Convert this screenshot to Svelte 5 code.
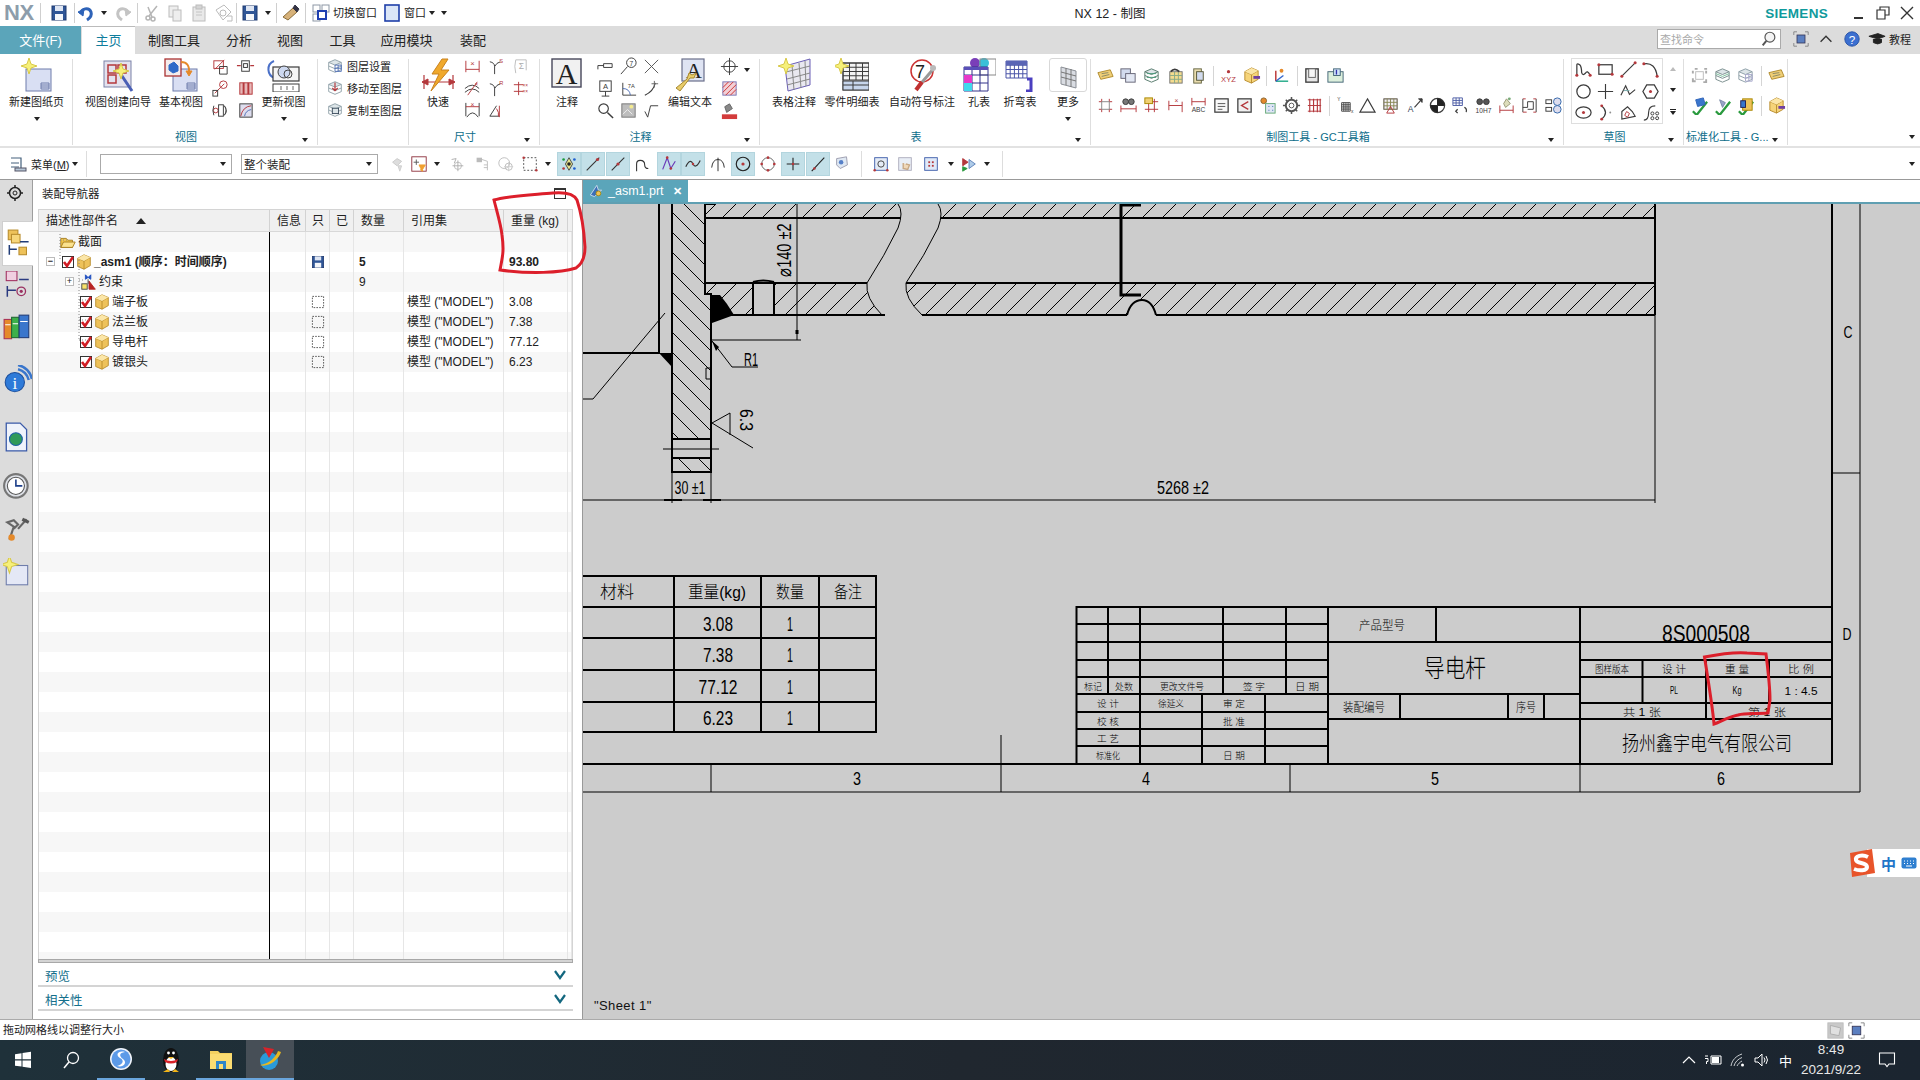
<script>
  const RED = "#b4383c", DK = "#3b3b3b", BL = "#4f6fb5", PALE = "#cdd8ef", YL = "#eec25a", GR = "#8f8f8f", OR = "#e58a2b";
  const p = (d, s = DK, w = 1, f = "none") => `<path d="${d}" fill="${f}" stroke="${s}" stroke-width="${w}"/>`;
  const r = (x, y, w, h, f = "none", s = "none", sw = 1) => `<rect x="${x}" y="${y}" width="${w}" height="${h}" fill="${f}" stroke="${s}" stroke-width="${sw}"/>`;
  const c = (x, y, rad, f = "none", s = DK, sw = 1) => `<circle cx="${x}" cy="${y}" r="${rad}" fill="${f}" stroke="${s}" stroke-width="${sw}"/>`;
  const t = (x, y, txt, size = 7, f = DK, fam = "Liberation Sans") => `<text x="${x}" y="${y}" font-size="${size}" fill="${f}" font-family="${fam}" text-anchor="middle">${txt}</text>`;
  const star = (x, y) => `<path d="M${x} ${y - 8}L${x + 2} ${y - 2}L${x + 8} ${y}L${x + 2} ${y + 2}L${x} ${y + 8}L${x - 2} ${y + 2}L${x - 8} ${y}L${x - 2} ${y - 2}Z" fill="#f6f07a" stroke="#d8c94a"/>`;
  const grid = (x, y, w, h, nx, ny, s = DK) => {
    let d = `M${x} ${y}h${w}v${h}h${-w}Z`;
    for (let i = 1; i < nx; i++) d += `M${x + (i * w) / nx} ${y}v${h}`;
    for (let i = 1; i < ny; i++) d += `M${x} ${y + (i * h) / ny}h${w}`;
    return p(d, s);
  };
  const cube = (f = YL) => p("M3 6L10 2L17 5V14L10 18L3 15Z", "#b98d2e", 1, f) + p("M3 6L10 9L17 5M10 9V18", "#b98d2e", 1, "none") + p("M3 6L10 2L17 5L10 9Z", "none", 1, "#fbe6a8");
  const floppy = (f = "#2f5596") => r(3, 3, 14, 14, f, "#1f3a70") + r(6, 3, 8, 5, "#dfe6f3") + r(6, 11, 8, 6, "#f4f6fa");
  const sheet = (x, y, w, h) => r(x, y, w, h, "#d9dff3", "#6f7dab") + grid(x + w - 10, y + h - 8, 8, 6, 1, 3, "#6f7dab");
  const stack = (s) => p("M3 6L10 3L17 6L10 9Z", s, 1, "#dde5e8") + p("M3 10L10 13L17 10M3 14L10 17L17 14", s) + p("M3 6V14M17 6V14", s);

  const I = {
    save: floppy(),
    undo: p("M5 11C5 5 13 4 15 9C16 12 14 15 11 17", "#2e63b8", 3) + p("M2 9L8 6L7 13Z", "#2e63b8", 1, "#2e63b8"),
    redo: p("M15 11C15 5 7 4 5 9C4 12 6 15 9 17", "#c4c4c4", 3) + p("M18 9L12 6L13 13Z", "#c4c4c4", 1, "#c4c4c4"),
    cut: c(6, 15, 2, "none", "#b5b5b5", 1.5) + c(11, 16, 2, "none", "#b5b5b5", 1.5) + p("M7 13L15 3M10 14L6 4", "#b5b5b5", 1.5),
    copy: r(4, 3, 9, 11, "#eee", "#bcbcbc") + r(8, 7, 8, 11, "#eee", "#bcbcbc"),
    paste: r(4, 4, 12, 14, "#e9e9e9", "#bcbcbc") + r(7, 2, 6, 4, "#d4d4d4", "#bcbcbc") + p("M7 9h6M7 12h6", "#c4c4c4"),
    dup: p("M3 7L11 2L18 9L10 17Z", "#bcbcbc") + c(10, 10, 3, "none", "#bcbcbc") + p("M14 13h5v5h-5", "#bcbcbc"),
    brush: p("M3 14L13 5L17 9L8 17Z", "#8a6d3b", 1, "#d7b27a") + p("M13 5L15 2L19 6L17 9Z", "#334", 1, "#334"),
    swin: r(2, 2, 7, 7, "#fff", "#8d97a5") + r(11, 2, 7, 7, "#fff", "#8d97a5") + r(2, 11, 7, 7, "#fff", "#8d97a5") + r(7, 8, 8, 8, "#fff", "#1f3fb0", 2),
    win: r(3, 2, 14, 16, "#dbe6f7", "#1f3fa8", 1.6),
    // view group
    vA: r(3, 4, 10, 8, "none", RED) + p("M4 13L14 3", RED, 1) + p("M9 18V10L17 10V18Z", DK),
    vB: r(6, 4, 8, 11, "none", DK) + r(8, 7, 4, 4, "none", DK) + p("M1 9h4M15 9h4", RED, 1.4),
    vC: p("M4 15L14 5", RED) + r(2, 12, 5, 6, "none", DK) + c(13, 6, 4, "none", RED),
    vD: r(4, 4, 13, 12, "#e7b8b8", RED) + p("M8 4v12M13 4v12", RED, 2),
    vE: c(5, 10, 2.5, "none", RED) + r(8, 4, 5, 12, "none", DK) + p("M14 5q4 5 0 10", DK, 1.2) + p("M3 5q-2 5 0 10", DK),
    vF: r(4, 3, 13, 14, "#dde", DK) + p("M5 16Q7 6 16 5", RED) + p("M9 16Q10 10 16 9", BL),
    layerSet: stack("#8c9ea6") + grid(10, 9, 7, 7, 2, 2, BL),
    layerMove: stack("#8c9ea6") + p("M10 4V13M7 10L10 13L13 10", RED, 1.3),
    layerCopy: stack("#8c9ea6") + r(7, 8, 7, 6, "#dde5e8", "#345"),
    // dims
    dA: p("M3 4V16M17 4V16M3 13H17", RED) + t(10, 9, "×", 8, RED),
    dB: p("M8 18V10Q8 6 3 5M8 10Q10 6 14 5", DK) + t(15, 6, "S", 6, RED),
    dC: p("M5 3L16 3M5 3Q3 10 5 17M16 3V14", "#bdbdbd") + t(11, 13, "Σ", 9, "#aaa"),
    dD: p("M2 10Q10 3 17 10M2 14Q10 7 17 14", DK) + p("M5 17L15 3", RED) + t(14, 7, "×", 6, RED),
    dE: p("M8 18V10Q8 6 3 5M8 10Q10 6 14 5", DK) + t(15, 6, "R", 6, RED),
    dF: p("M3 6H13M3 13H13M8 3V17", RED) + t(15, 8, "××", 5, RED) + t(15, 15, "××", 5, RED),
    dG: p("M3 2V16M17 2V16M4 17Q10 8 16 17", DK) + p("M3 6H17", RED) + t(10, 6, "×", 7, RED),
    dH: p("M3 16L10 5M3 16H13", DK) + p("M13 5V17", RED) + p("M10 8q3 4 2 8", RED),
    nA: p("M2 9H8M8 7H17V11H8Z", DK) + p("M2 9V13", DK),
    nB: p("M2 18L9 10", DK) + c(13, 6, 5, "none", DK) + t(13, 9, "7", 7, DK),
    nC: p("M3 3L17 17M17 3L3 17", "#555"),
    nD: r(4, 2, 12, 11, "none", DK) + t(10, 11, "A", 8) + p("M10 13V18M6 18H14", DK),
    nE: p("M4 17V4M4 17H18", DK) + p("M4 10Q11 10 12 17", BL) + t(13, 9, "7A", 6),
    nF: p("M3 17Q12 13 14 4", DK, 1.2) + p("M13 2V9M10 5H17", "#666", 1, "none"),
    nG: c(8, 8, 5, "none", DK, 1.2) + p("M12 12L18 18", DK, 1.5),
    nH: r(3, 3, 14, 14, "#bdbdbd", "#777") + p("M4 14L9 9L14 14", "#eee") + c(13, 6, 2, "#f3ea8f", "none"),
    nI: p("M3 11L6 17L9 5H17", DK),
    target: c(10, 10, 6, "none", DK) + p("M10 1V19M1 10H19", DK),
    hatch: r(3, 3, 14, 14, "#f2d0d6", "#7a78b8") + p("M3 9L9 3M3 14L14 3M6 17L17 6M11 17L17 11", "#c33"),
    paint: r(2, 14, 16, 5, "#d33c3c") + p("M7 12L13 8L10 3L5 6Z", "#666", 1, "#888"),
    // GC
    tag: p("M2 7L15 4L18 11L5 14Z", "#b08b2e", 1, "#f0cf76") + p("M6 8L13 7M6 11L14 9", "#886"),
    sheets: r(2, 3, 10, 10, "#d2dbee", "#667") + r(7, 8, 10, 9, "#e2e7f3", "#667"),
    gstack: stack("#55796c") + p("M5 8H15M5 12H15", "#4a9a7a"),
    tbook: r(4, 6, 13, 12, "#f4dc8e", "#777") + p("M4 10H17M4 14H17M9 6V18M13 6V18", "#8a8") + p("M5 6Q9 1 14 6", DK, 2),
    bookm: r(5, 3, 8, 15, "#e9dcae", "#664") + r(8, 6, 7, 9, "#d2dbee", "#553"),
    xyz: t(10, 17, "XYZ", 8, RED) + c(10, 6, 1.7, RED, "none"),
    boxar: cube("#f6d479") + p("M12 12H19", "#7040a0", 3),
    axis: p("M4 16V5", "#b33", 1.5) + p("M4 16H17", "#2a8", 1.5) + p("M4 16L12 10", "#36c", 1.5) + c(10, 5, 2, OR, "none"),
    gframe: r(3, 3, 13, 14, "#e7e7e7", DK, 1.4) + r(6, 3, 7, 9, "#f6f6f6", "#666"),
    gflag: r(2, 6, 16, 11, "#dcefdc", "#467") + r(8, 3, 7, 7, "#cfe2fa", "#467") + p("M11 4V9", "#33a", 1.4),
    g1: p("M3 6h3M14 6h3M3 14h3M14 14h3M6 3v3M14 3v3M6 14v3M14 14v3", RED) + p("M6 6h8v8h-8z", "#888", 1),
    g2: r(2, 13, 16, 1, RED) + p("M2 10V17M18 10V17", RED) + c(7, 6, 3, "#777", DK) + c(13, 6, 3, "#777", DK),
    g3: p("M3 6H17M3 14H17M7 3V17M13 3V17", RED) + r(3, 2, 8, 6, "#f1d074", "#a80"),
    g4: p("M3 5V15M3 10H17M17 6V17", RED) + t(11, 7, "×", 7, RED),
    g5: p("M3 2V10M17 2V10M3 6H17", RED) + t(10, 17, "ABC", 7, DK),
    g6: r(3, 3, 14, 14, "#f8f8f8", DK, 1.3) + p("M6 8H14M6 11H14M6 14H11", "#555"),
    g7: r(3, 3, 14, 14, "#f0f0f0", DK, 1.3) + p("M14 6L7 10L14 14", RED, 1.5),
    g8: c(6, 5, 3, OR, "#863") + r(8, 8, 10, 10, "#dfe6f5", "#6a7") + p("M11 11h1M15 11h1M11 15h1M15 15h1", "#36a"),
    gear: c(10, 10, 6, "none", "#555", 2) + c(10, 10, 2.5, "none", "#555") + p("M10 1v3M10 16v3M1 10h3M16 10h3M4 4l2 2M14 14l2 2M16 4l-2 2M6 14l-2 2", "#555", 1.6),
    g9: p("M3 4H17M3 10H17M3 16H17", RED) + p("M5 3V17M9 3V17M13 3V17M16 3V17", RED, 1.2),
    g10: grid(7, 7, 9, 9, 4, 4, "#444") + t(4, 5, "Y", 5) + t(18, 18, "x", 5),
    tri: p("M10 3L18 17H2Z", DK, 1.2),
    g11: r(3, 3, 14, 11, "#f3f0f5", "#7060a0") + grid(3, 3, 14, 11, 4, 3, "#885") + p("M10 11L14 18H6Z", RED),
    g12: t(6, 17, "A", 9, "#345") + p("M10 12L18 3", DK, 1.2) + p("M14 3H18V7", DK, 1, DK),
    ball: c(10, 10, 7.5, "#fff", DK, 1.3) + p("M10 3A7 7 0 0 1 17 10H10Z", "#222", 1, "#222") + p("M10 17A7 7 0 0 1 3 10H10Z", "#222", 1, "#222"),
    g13: grid(2, 2, 10, 8, 3, 3, "#5060a8") + p("M14 12q3 1 2 5M7 14l-2 2 2 2", DK, 1.3),
    g14: c(6, 6, 3, "#555", DK) + c(13, 6, 3, "#555", DK) + t(10, 18, "10H7", 7, DK),
    g15: p("M3 10V18M17 10V18M3 15H17", RED) + p("M10 3L14 8L9 12L7 8Z", "#997", 1, "#ddb") + c(13, 3, 1.5, "#7a7", "none"),
    g16: p("M3 12H8V6H14V14H8M3 3V17M17 3V17", DK) + p("M3 3H6M3 17H7M14 3H17M14 17H17", RED),
    g17: r(2, 4, 6, 4, "none", DK) + r(2, 12, 6, 4, "none", DK) + c(14, 6, 4, "#dde", "#36a") + c(14, 14, 4, "#dde", "#36a"),
    // sketch
    sk1: p("M3 16V5Q3 3 6 5Q8 7 8 13Q9 17 12 14Q14 10 17 16", DK, 1.3) + c(3, 16, 1.6, RED, "none") + c(17, 16, 1.6, RED, "none"),
    sk2: r(3, 5, 14, 10, "none", DK, 1.3) + c(3, 5, 1.6, RED, "none") + c(17, 15, 1.6, RED, "none"),
    sk3: p("M3 17L17 3", DK, 1.2) + c(3, 17, 1.6, RED, "none") + c(17, 3, 1.6, RED, "none"),
    sk4: p("M3 4Q15 2 17 17", DK, 1.3) + c(3, 4, 1.6, RED, "none") + c(17, 17, 1.6, RED, "none"),
    sk5: c(10, 10, 7, "none", DK, 1.3),
    sk6: p("M10 2V18M2 10H18", DK, 1.2),
    sk7: p("M2 14L7 4L11 13L17 8", DK, 1.2) + p("M5 9h6", "#7aa"),
    sk8: p("M2 10L6 3H14L18 10L14 17H6Z", DK, 1.3) + c(10, 10, 1.6, RED, "none"),
    sk9: `<ellipse cx="10" cy="10" rx="8" ry="6" fill="none" stroke="${DK}" stroke-width="1.3"/>` + c(10, 10, 1.6, RED, "none"),
    sk10: p("M6 3Q14 10 6 17", DK, 1.3) + c(15, 10, 1, GR, "none") + c(6, 3, 1.5, RED, "none") + c(6, 17, 1.5, RED, "none"),
    sk11: p("M3 9L9 4L14 9L17 14L3 17Z", DK, 1.2) + p("M8 9L11 11L9 15L6 13Z", RED),
    sk12: p("M3 18Q8 18 8 10Q8 3 15 3", DK, 1.2) + c(12, 11, 1.6, "none", DK) + c(17, 11, 1.6, "none", DK) + c(12, 16, 1.6, "none", DK) + c(17, 16, 1.6, "none", DK),
    // std
    st1: p("M5 3H8M3 5V8M15 3H18M17 5V8M3 13V16H6M14 17H17V14", "#aaa", 2) + r(6, 6, 8, 8, "none", "#bbb"),
    st2: stack("#7a8e8e") + p("M3 8L10 11L17 8", "#7b9"),
    st3: stack("#8c9ea6") + grid(10, 9, 7, 7, 2, 2, "#aac"),
    st4: p("M3 16L7 20L18 6", "#2a9a3e", 2.4) + p("M6 4L14 2L16 9L8 11Z", "#2e63b8", 1, "#3a76cc"),
    st5: p("M3 16L7 20L18 6", "#2a9a3e", 2.4) + p("M7 4L13 7L10 12Z", "#7a88a8", 1, "#98a6c8"),
    st6: p("M3 16L7 20L18 6", "#2a9a3e", 2.4) + r(7, 3, 10, 12, YL, "#a80") + r(5, 5, 5, 7, "#3a76cc", "#225"),
    // toolbar
    menu: p("M2 4H12V17M2 9H10M2 13H10", "#44607c", 1.2) + r(6, 14, 11, 3, "#b8c8d8", "#556"),
    f1: p("M4 8L9 4L14 7L9 12Z", "#c8c8c8", 1, "#ddd") + p("M10 12L14 12L12 18Z", "#ccc", 1, "#ddd"),
    f2: r(2, 2, 16, 16, "#fff", "#8c2f3a") + p("M7 5V11M4 8H10", "#555") + p("M10 11H17L14 16V18L12 17V15Z", "#f0a030", 1, "#f0a030"),
    f3: c(11, 12, 4, "none", "#bbb") + p("M11 6V18M5 12H17M4 5L9 4L7 9", "#aaa"),
    f4: r(4, 3, 6, 5, "#bbb") + p("M10 5L16 7V17M12 11h4M12 14h4", "#bbb"),
    f5: c(8, 9, 6, "none", "#bbb") + c(13, 13, 4, "none", "#bbb") + p("M13 8V18M8 13H18", "#ccc"),
    f6: `<path d="M3 3h14v14H3z" fill="none" stroke="#444" stroke-dasharray="2 2"/>` + c(3, 3, 1.4, RED, "none") + c(17, 17, 1.4, RED, "none"),
    s1: p("M10 3L14 10L10 17L6 10Z", "#444", 1, "#e5e28c") + c(4, 5, 1.5, "#1c9a3c", "none") + c(4, 15, 1.5, RED, "none") + c(16, 5, 1.5, "#1f5fd0", "none") + c(16, 15, 1.5, "#1f5fd0", "none") + c(10, 10, 2, "#222", "none"),
    s2: p("M3 17L17 3", "#333", 1.2) + c(15, 5, 1.8, RED, "none"),
    s3: p("M3 17L17 3", "#333", 1.2) + c(10, 10, 1.8, RED, "none"),
    s4: p("M4 18V10Q4 6 8 6Q13 6 13 11Q13 15 17 15", "#333", 1.2),
    s5: p("M3 16L8 3L12 15L17 7", "#6a3ab8", 1.3) + c(8, 3, 1.5, RED, "none") + c(12, 15, 1.5, RED, "none"),
    s6: p("M2 13Q7 3 10 10Q13 16 18 6", "#333", 1.3) + c(10, 10, 1.4, RED, "none"),
    s7: p("M10 3V18M3 14Q4 5 10 5Q16 5 17 14", "#333", 1.1),
    s8: c(10, 10, 7.5, "none", "#222", 1.3) + c(10, 10, 1.8, RED, "none"),
    s9: c(10, 10, 7, "none", "#666", 1.1) + c(10, 3, 1.5, RED, "none") + c(3, 10, 1.5, RED, "none") + c(17, 10, 1.5, RED, "none") + c(10, 17, 1.5, RED, "none"),
    s10: p("M10 3V17M3 10H17", "#222", 1.2) + c(10, 10, 1.4, RED, "none"),
    s11: p("M3 18L17 3", "#222", 1.2) + c(6, 15, 1.5, RED, "none"),
    s12: p("M4 4L15 2L16 11L8 15L4 11Z", "#99a", 1, "#dfe8f3") + c(9, 8, 2.5, "#5680c8", "none"),
    v1: r(3, 3, 14, 14, "#e4ebf6", "#3a5aa8") + c(10, 10, 3.5, "none", DK) + c(3, 17, 1.4, RED, "none") + c(17, 17, 1.4, RED, "none"),
    v2: r(3, 3, 14, 14, "#e9eef6", "#aab") + p("M8 9V15L13 16L15 11L11 10", "#c8a884", 1.5, "#f0d8b8"),
    v3: r(3, 3, 14, 14, "#dfe9f8", "#3a5aa8") + r(7, 7, 2, 2, RED) + r(11, 7, 2, 2, RED) + r(7, 11, 2, 2, RED) + r(11, 11, 2, 2, RED),
    v4: p("M10 5L17 10L10 15Z", "#5a7fb8", 1, "#aecbe8") + p("M3 4L9 8L3 12Z", RED, 1, RED) + p("M3 13L8 15L3 18Z", "#2a9a3e", 1, "#2a9a3e"),
    tGear: c(10, 10, 5.5, "none", "#222", 1.5) + c(10, 10, 2, "none", "#222") + p("M10 2v3M10 15v3M2 10h3M15 10h3", "#222", 1.5),
    // status
    flagsq: r(1, 1, 18, 18, "#c9c9c9", "#bbb") + p("M4 4L16 7L14 16L4 14Z", "#aaa", 1, "#e0e0e0"),
    fitwin: p("M1 5V1H5M15 1H19V5M1 15V19H5M15 19H19V15", "#777") + r(5, 5, 10, 10, "#5b7fc0", "#335"),
    // tree
    folder: p("M2 6H8L10 8H15V16H2Z", "#a57a1c", 1, "#f2c74e") + p("M2 16L5 10H18L15 16Z", "#a57a1c", 1, "#fbe28e"),
    asm: cube(),
    cube: cube(),
    constraint: p("M6 2L9 5L12 2V7L9 5L6 7Z", "#1f4fc0", 1, "#1f4fc0") + r(2, 12, 6, 6, "#f7e26a", "#444") + p("M10 18L10 9L17 18Z", "#b72222", 1, "#b72222") + p("M9 7V12", DK, 1, "none"),
    dash: `<rect x="3" y="3" width="14" height="14" fill="none" stroke="#333" stroke-dasharray="2 1.5"/>`,
    // tab bar right
    search: c(11, 8, 5.5, "#f4f4f4", "#555", 1.3) + p("M7 12L3 17", "#555", 2.2),
    tChev: p("M4 13L10 7L16 13", "#333", 1.5),
    help: c(10, 10, 8, "#3b6fd0", "#244fa4") + t(10, 15, "?", 13, "#fff"),
    edu: p("M1 7L11 4L19 7L11 10Z", "#222", 1, "#222") + p("M6 10V14Q11 17 15 14V10", "#222", 1, "#222"),
    tabIco: p("M3 15L11 3L13 9L17 9L8 17Z", "#e0e6f2", 1, "#3b6fb8") + c(13, 13, 3, YL, "#a80"),
  };

  const B = {
    newSheet: sheet(6, 11, 25, 22) + star(9, 8),
    wizard: r(3, 3, 27, 26, "#e4e2ee", "#7b82a8") + r(7, 7, 8, 8, "none", RED, 1.5) + r(17, 7, 8, 8, "none", RED, 1.5) + r(7, 17, 8, 8, "none", RED, 1.5) + p("M19 15L31 33", "#4a5fb5", 3) + star(20, 13),
    baseView: sheet(9, 11, 24, 22) + r(1, 1, 16, 17, "#f4ecec", "#a33", 1.3) + p("M5 7L10 4L14 8V13L9 15L5 12Z", "#2f6ac8", 1, "#2f6ac8") + p("M17 4Q26 4 25 15", OR, 2) + p("M22 13L28 13L25 18Z", OR, 1, OR),
    updView: p("M7 3A9 9 0 0 0 8 20", "#4a70c8", 2) + r(6, 9, 26, 14, "#f5f5f5", DK, 1.2) + c(17, 14, 6, PALE, "#444") + c(21, 16, 4, "none", "#444") + r(6, 26, 26, 8, "none", DK) + p("M14 28v4M20 28v4M26 28v4", "#666"),
    quick: p("M1 24H34M3 17V31M32 17V31", RED, 1.2) + p("M1 24L7 21V27ZM34 24L28 21V27Z", RED, 1, RED) + p("M21 1L11 16H18L10 33L28 12H20L27 1Z", "#c9821e", 1, "#f0a92c"),
    annot: r(2, 1, 29, 28, "#f1f1f1", "#47475a", 1.4) + t(16.5, 26, "A", 30, "#222", "Liberation Serif"),
    edit: r(9, 1, 22, 22, "#dfe4f3", "#6a6f8a", 1.2) + t(21, 20, "A", 22, "#222", "Liberation Serif") + p("M3 30L7 33L17 20L21 20L23 15L19 17L16 15L14 21Z", "#a88a33", 1, "#e8cc6a"),
    tableNote: p("M8 8L33 1L33 27L11 33Z", "#6a5fb5", 1, "#e9e8f0") + p("M9 14L33 8M10 21L33 15M10 27L33 21M15 7L17 32M22 5L24 30M28 3L29 28", "#888") + star(9, 8),
    parts: r(8, 5, 26, 27, "#f4f4f4", DK) + grid(8, 5, 26, 17, 4, 4) + r(8, 23, 26, 9, "#c7d6ec", DK) + p("M8 27H34M18 23V32", DK) + star(6, 8),
    balloon: c(17, 13, 11, "#fff", "#c33", 1.5) + t(15, 20, "7", 18, "#222") + p("M30 9L13 29", "#999", 3) + p("M17 24L11 32", "#c03030", 4) + c(28, 10, 3, "#bbb", "none"),
    holeT: c(13, 5, 5, "#7a3fb8", "none") + c(22, 5, 5, "#3ac0d8", "none") + r(18, 1, 16, 16, "none", "#888") + grid(2, 9, 24, 24, 3, 3, "#33338a") + r(2, 9, 24, 3, "#5a4fb8") + r(2, 17, 8, 8, "#e838c8") + r(2, 25, 8, 8, "#40d8ec"),
    bend: grid(3, 3, 21, 17, 5, 4, "#4a55a8") + r(3, 3, 21, 4, "#5a65b5") + p("M24 21H28V33H23", "#4a3fc0", 3),
    more: p("M10 9L25 13V30L10 26Z", "#8b8f96", 1, "#d9dce2") + p("M10 14L25 18M10 19L25 23M15 10V27M20 11V29", "#777"),
  };

  const tabs = ["制图工具", "分析", "视图", "工具", "应用模块", "装配"];
  const tabW = [78, 52, 50, 55, 73, 60];

  const sideItems = [
    { i: "tGear", h: 41, s: 20, top: 3 },
    { i: "navA", h: 45, on: true },
    { i: "navB", h: 39 },
    { i: "navC", h: 45 },
    { i: "navD", h: 60 },
    { i: "navE", h: 53 },
    { i: "navF", h: 50 },
    { i: "navG", h: 35 },
    { i: "navH", h: 49 },
  ];
  const S = {
    navA: r(3, 1, 9, 9, YL, "#b98d2e") + r(6, 5, 8, 8, "#f7d67a", "#b98d2e") + p("M4 15V24M4 19H11M14 12H22", "#223d78", 1.4) + r(13, 17, 7, 7, YL, "#b98d2e"),
    navB: r(3, 0, 10, 9, "#f0cfe0", "#a03060") + p("M4 14V24M4 18H12M15 8H24", "#2a3a80", 1.4) + c(17, 19, 4, "none", "#9a3060", 1.2) + c(17, 19, 1.5, "#9a3060", "none"),
    navC: r(1, 6, 7, 18, "#e58a2b", "#a35") + r(8, 4, 7, 19, "#3db04a", "#263") + r(15, 2, 9, 21, "#3a76cc", "#223d78") + p("M2 11H7M9 10H14M16 8H23", "#fff"),
    navD: p("M14 4A14 14 0 0 1 24 14M14 0A18 18 0 0 1 27 13", "#3a76cc", 2.4) + c(11, 16, 9, "#2e7ad8", "#1d4f9c") + t(11, 22, "i", 16, "#fff", "Liberation Serif"),
    navE: p("M3 1H16L22 7V27H3Z", "#3a5aa8", 1.2, "#eff3fb") + c(12, 16, 6, "#2f9a5a", "#1d5fa8"),
    navF: c(12, 12, 11, "#dfe2e8", "#777", 2) + c(12, 12, 8, "#fff", "#555") + p("M12 6V12H18", "#1d3f8a", 1.5),
    navG: p("M6 22L10 10L4 6L10 4L14 8L10 12M14 12L22 3", "#666", 2) + c(8, 20, 3, "#e58a2b", "none") + p("M18 3L24 6", "#555", 3),
    navH: r(3, 7, 20, 18, "#e4e8f6", "#6f7dab") + star(6, 6),
  };

  const big = (i, l, w, caret = false, ml = 0) => ({ k: "big", i, l, w, caret, ml });
  const igrid = (w, cols, icons, ml = 0) => ({ k: "grid", w, cols, icons, ml });
  const groups = [
    { w: 73, label: "", items: [big("newSheet", "新建图纸页", 73, true)] },
    {
      w: 245, label: "视图", launch: true,
      items: [big("wizard", "视图创建向导", 90), big("baseView", "基本视图", 36), igrid(25, 2, ["vA", "vB", "vC", "vD", "vE", "vF"], 9), big("updView", "更新视图", 51, true)],
    },
    { w: 91, label: "", layers: [["layerSet", "图层设置"], ["layerMove", "移动至图层"], ["layerCopy", "复制至图层"]] },
    { w: 131, label: "尺寸", launch: true, items: [big("quick", "快速", 44, false, 7), igrid(24, 3, ["dA", "dB", "dC", "dD", "dE", "dF", "dG", "dH", ""])] },
    {
      w: 220, label: "注释", launch: true,
      items: [big("annot", "注释", 54), igrid(23, 3, ["nA", "nB", "nC", "nD", "nE", "nF", "nG", "nH", "nI"]), big("edit", "编辑文本", 54), igrid(24, 1, ["target", "hatch", "paint"])],
    },
    {
      w: 331, label: "表", launch: true,
      items: [big("tableNote", "表格注释", 52, false, 8), big("parts", "零件明细表", 64), big("balloon", "自动符号标注", 76), big("holeT", "孔表", 38), big("bend", "折弯表", 44), big("more", "更多", 44, true, 4)],
    },
  ];
  const gcRow1 = ["tag", "sheets", "gstack", "tbook", "bookm", "|", "xyz", "boxar", "|", "axis", "|", "gframe", "gflag"];
  const gcRow2 = ["g1", "g2", "g3", "g4", "g5", "g6", "g7", "g8", "gear", "g9", "|", "g10", "tri", "g11", "g12", "ball", "g13", "g14", "g15", "g16", "g17"];
  const sketch = ["sk1", "sk2", "sk3", "sk4", "sk5", "sk6", "sk7", "sk8", "sk9", "sk10", "sk11", "sk12"];

  const tb = [
    { i: "f1", w: 23 }, { i: "f2", w: 20 }, { c: 1, w: 16 }, { i: "f3", w: 24 }, { i: "f4", w: 25 }, { i: "f5", w: 24 }, { i: "f6", w: 24 }, { c: 1, w: 12 },
    { i: "s1", w: 24, on: 1, ml: 3 }, { i: "s2", w: 24, on: 1 }, { i: "s3", w: 24, on: 1, ml: 1 }, { i: "s4", w: 24 }, { i: "s5", w: 24, on: 1, ml: 3 }, { i: "s6", w: 24, on: 1 },
    { i: "s7", w: 24, ml: 1 }, { i: "s8", w: 24, on: 1, ml: 1 }, { i: "s9", w: 24, ml: 1 }, { i: "s10", w: 24, on: 1, ml: 1 }, { i: "s11", w: 24, on: 1, ml: 1 }, { i: "s12", w: 24 },
    { sep: 1 }, { i: "v1", w: 24 }, { i: "v2", w: 23 }, { i: "v3", w: 24, ml: 3 }, { c: 1, w: 16 }, { i: "v4", w: 20 }, { c: 1, w: 16 }, { sep: 1 },
  ];

  const cols = ["描述性部件名", "信息", "只", "已", "数量", "引用集", "重量 (kg)"];
  const rows = [
    { pl: 19, ic: "folder", name: "截面" },
    { pl: 7, box: "−", chk: 1, ic: "asm", name: "_asm1 (顺序：时间顺序)", bold: 1, save: 1, qty: "5", w: "93.80" },
    { pl: 26, box: "+", ic: "constraint", name: "约束", qty: "9", wide: 1 },
    { pl: 41, chk: 1, ic: "cube", name: "端子板", dash: 1, ref: '模型 ("MODEL")', w: "3.08" },
    { pl: 41, chk: 1, ic: "cube", name: "法兰板", dash: 1, ref: '模型 ("MODEL")', w: "7.38" },
    { pl: 41, chk: 1, ic: "cube", name: "导电杆", dash: 1, ref: '模型 ("MODEL")', w: "77.12" },
    { pl: 41, chk: 1, ic: "cube", name: "镀银头", dash: 1, ref: '模型 ("MODEL")', w: "6.23" },
  ];
  const blanks = Array.from({ length: 30 });

  // drawing: [x, y, text, font size, stretched length]
  const labels = [
    [617, 598, "材料", 17, 34], [717, 598, "重量(kg)", 17, 58], [790, 598, "数量", 17, 28], [848, 598, "备注", 17, 28],
    [718, 631, "3.08", 20, 30], [790, 631, "1", 20, 6], [718, 662, "7.38", 20, 30], [790, 662, "1", 20, 6],
    [718, 694, "77.12", 20, 39], [790, 694, "1", 20, 6], [718, 725, "6.23", 20, 30], [790, 725, "1", 20, 6],
    [857, 785, "3", 19, 8], [1146, 785, "4", 19, 8], [1435, 785, "5", 19, 8], [1721, 785, "6", 19, 8],
    [1382, 630, "产品型号", 12, 46], [1455, 677, "导电杆", 25, 62], [1364, 712, "装配编号", 12, 42], [1526, 712, "序号", 12, 20],
    [1706, 642, "8S000508", 24, 88], [1707, 751, "扬州鑫宇电气有限公司", 20, 170],
    [1612, 673, "图样版本", 10, 34], [1674, 673, "设 计", 10, 24], [1737, 673, "重 量", 10, 24], [1801, 673, "比 例", 10, 26],
    [1674, 694, "PL", 10, 8], [1737, 694, "Kg", 10, 9], [1801, 695, "1 : 4.5", 11, 33],
    [1642, 716, "共 1 张", 10, 38], [1767, 716, "第 1 张", 10, 38],
    [1093, 690, "标记", 9, 18], [1124, 690, "处数", 9, 18], [1182, 690, "更改文件号", 9, 44], [1254, 690, "签 字", 9, 22], [1307, 690, "日 期", 9, 24],
    [1108, 707, "设 计", 9, 22], [1171, 707, "徐延义", 9, 26], [1234, 707, "审 定", 9, 22], [1108, 725, "校 核", 9, 22], [1234, 725, "批 准", 9, 22],
    [1108, 742, "工 艺", 9, 22], [1108, 759, "标准化", 9, 24], [1234, 759, "日 期", 9, 22],
    [1848, 338, "C", 16, 9], [1847, 640, "D", 16, 9], [1183, 494, "5268 ±2", 19, 52], [690, 494, "30 ±1", 19, 31], [751, 366, "R1", 18, 14],
  ];
  const heavy = ["M1121 204V295H1141M1121 205H1141"];
  const thick = [
    "M659 204V353H583", "M672 204V472H711V295", "M705 204V294H712", "M705 218H901", "M941 218H1655", "M705 283H867", "M906 283H1655", "M731 315H885", "M922 315H1127",
    "M1156 315H1655", "M1655 204V315", "M672 439H711M672 458H711", "M753 282V315M774 282V315", "M753 282Q763 279 774 282",
    "M705 204H716", "M1127 315Q1131 300 1142 300Q1152 300 1156 315",
    // sheet frame and tables
    "M1832 204V764H583", "M583 576H876V732H583M583 607H876M583 638H876M583 670H876M583 702H876M674 576V732M761 576V732M819 576V732",
    "M1076.5 764V607H1832M1076.5 624H1328M1076.5 642H1832M1076.5 660H1328M1076.5 677H1328M1076.5 694H1580M1076.5 712H1328M1076.5 729H1328M1076.5 746H1328",
    "M1108 607V694M1140 607V764M1223 607V694M1286 607V694M1328 607V764M1202 694V764M1265 694V764",
    "M1436 607V642M1328 719H1832M1400 694V719M1508 694V719M1544 694V719M1580 607V764M1580 660H1832M1580 677H1832M1580 703H1832M1642.5 660V703M1706 660V719M1769 660V703",
  ];
  const thin = [
    "M898 204Q904 212 898 228Q885 255 867 283Q865 298 882 315", "M938 204Q944 212 938 228Q925 255 906 283Q904 298 922 315",
    "M797 204V340M712 340H801", "M712 341L732 367H758", "M665 313L593 399H583",
    "M712 423L730 413V435M712 423L753 448", "M663 449H719", "M672 472V503M711 472V503", "M583 500H1655M1655 315V503", "M706 368H711V379H706Z",
    "M1860 204V792H583M1832 473H1860", "M711 764V792M1001 735V792M1290 764V792M1580 764V792",
  ];
</script>

{#snippet ic(name, size = 20)}
  {#if name}
    <svg class="ic" width={size} height={size} viewBox="0 0 20 20">{@html I[name]}</svg>
  {/if}
{/snippet}

{#snippet bigic(name)}
  <svg class="ic" width="34" height="34" viewBox="0 0 34 34">{@html B[name]}</svg>
{/snippet}

{#snippet caret()}
  <span class="caret"></span>
{/snippet}

<div class="app">
  <header class="titlebar">
    <div class="quick">
      <span class="nx">NX</span>
      <i class="vsep nxsep"></i>
      <span class="q w30">{@render ic("save")}</span>
      <i class="vsep"></i>
      <span class="q w22">{@render ic("undo")}</span><span class="q w14">{@render caret()}</span><span class="q w24">{@render ic("redo")}</span>
      <i class="vsep m2"></i>
      <span class="q w23">{@render ic("cut")}</span><span class="q w24">{@render ic("copy")}</span><span class="q w24">{@render ic("paste")}</span><span class="q w23">{@render ic("dup")}</span>
      <i class="vsep m2"></i>
      <span class="q w22">{@render ic("save")}</span><span class="q w14">{@render caret()}</span>
      <i class="vsep m1"></i>
      <span class="q w24">{@render ic("brush")}</span>
      <i class="vsep m3"></i>
      <span class="q w24">{@render ic("swin")}</span>
      <span class="qlabel">切换窗口</span>
      <span class="q w24 lm">{@render ic("win")}</span>
      <span class="qlabel">窗口</span>
      <span class="q w12">{@render caret()}</span>
      <span class="q w12 dblcaret">{@render caret()}</span>
    </div>
    <div class="apptitle">NX 12 - 制图</div>
    <div class="brand">SIEMENS</div>
    <div class="winbtns">
      <svg width="14" height="14" viewBox="0 0 14 14"><path d="M2 12h9" stroke="#333" stroke-width="2"/></svg>
      <svg width="14" height="14" viewBox="0 0 14 14"><path d="M1 4h8v9H1zM4 4V1h9v8H9" fill="none" stroke="#333" stroke-width="1.2"/></svg>
      <svg width="16" height="16" viewBox="0 0 16 16"><path d="M2 2l12 12M14 2L2 14" stroke="#333" stroke-width="1.4"/></svg>
    </div>
  </header>

  <nav class="tabs">
    <div class="filetab">文件(F)</div>
    <div class="tab current">主页</div>
    {#each tabs as tab, n}
      <div class="tab" style="width:{tabW[n]}px">{tab}</div>
    {/each}
    <div class="tabright">
      <div class="searchbox"><span>查找命令</span>{@render ic("search", 18)}</div>
      <span class="tr1">{@render ic("fitwin", 16)}</span>
      <span class="tr2">{@render ic("tChev", 18)}</span>
      <span class="tr3">{@render ic("help", 18)}</span>
      <span class="tr4">{@render ic("edu", 18)}<span>教程</span></span>
    </div>
  </nav>

  <section class="ribbon">
    {#each groups as g}
      <div class="group" style="width:{g.w}px">
        <div class="gbody">
          {#if g.layers}
            <div class="layers">
              {#each g.layers as [icon, label]}
                <div class="layer">{@render ic(icon, 18)}<span>{label}</span></div>
              {/each}
            </div>
          {:else}
            {#each g.items as item}
              {#if item.k === "big"}
                <div class="bigbtn" class:boxed={item.i === "more"} style="width:{item.w}px;margin-left:{item.ml}px">
                  <span class="bigic">{@render bigic(item.i)}</span>
                  <span class="biglabel">{item.l}</span>
                  {#if item.caret}{@render caret()}{/if}
                </div>
              {:else}
                <div class="igrid" style="grid-template-columns:repeat({item.cols},{item.w}px);margin-left:{item.ml}px">
                  {#each item.icons as name}
                    <span class="cell">
                      {@render ic(name, 19)}
                      {#if name === "target"}<span class="cellcaret">{@render caret()}</span>{/if}
                    </span>
                  {/each}
                </div>
              {/if}
            {/each}
          {/if}
        </div>
        <div class="glabel" class:launched={g.launch}>{g.label}{#if g.launch}<span class="launch">{@render caret()}</span>{/if}</div>
      </div>
    {/each}

    <div class="group gc">
      <div class="gbody rows2">
        <div class="grow">
          {#each gcRow1 as name}
            {#if name === "|"}<i class="msep"></i>{:else}<span class="gcell">{@render ic(name, 19)}</span>{/if}
          {/each}
        </div>
        <div class="grow">
          {#each gcRow2 as name}
            {#if name === "|"}<i class="msep"></i>{:else}<span class="gcell">{@render ic(name, 19)}</span>{/if}
          {/each}
        </div>
      </div>
      <div class="glabel launched">制图工具 - GC工具箱<span class="launch">{@render caret()}</span></div>
    </div>

    <div class="group sk">
      <div class="gbody skbody">
        <div class="gallery">
          {#each sketch as name}
            <span class="skcell">{@render ic(name, 19)}</span>
          {/each}
        </div>
        <div class="scroller">
          <span class="up"></span>
          {@render caret()}
          <span class="lined">{@render caret()}</span>
        </div>
      </div>
      <div class="glabel launched">草图<span class="launch">{@render caret()}</span></div>
    </div>

    <div class="group std">
      <div class="gbody rows2 stdrows">
        <div class="grow">
          <span class="gcell">{@render ic("st1", 19)}</span><span class="gcell">{@render ic("st2", 19)}</span><span class="gcell">{@render ic("st3", 19)}</span><i class="msep"></i><span class="gcell">{@render ic("tag", 19)}</span>
        </div>
        <div class="grow">
          <span class="gcell">{@render ic("st4", 19)}</span><span class="gcell">{@render ic("st5", 19)}</span><span class="gcell">{@render ic("st6", 19)}</span><i class="msep"></i><span class="gcell">{@render ic("boxar", 19)}</span>
        </div>
      </div>
      <div class="glabel stdlabel">标准化工具 - G...<span class="launch">{@render caret()}</span></div>
    </div>

    <div class="ribbonend">{@render caret()}</div>
  </section>

  <section class="toolbar">
    <div class="menubtn">{@render ic("menu", 20)}<span>菜单(<u>M</u>)</span>{@render caret()}</div>
    <i class="tsep first"></i>
    <div class="sel one">{@render caret()}</div>
    <div class="sel two"><span>整个装配</span>{@render caret()}</div>
    {#each tb as item}
      {#if item.sep}
        <i class="tsep"></i>
      {:else if item.c}
        <span class="tcell" style="width:{item.w}px">{@render caret()}</span>
      {:else}
        <span class="tcell" class:on={item.on} style="width:{item.w}px;margin-left:{item.ml ?? 0}px">{@render ic(item.i, 18)}</span>
      {/if}
    {/each}
    <span class="tbend">{@render caret()}</span>
  </section>

  <main class="main">
    <aside class="side">
      {#each sideItems as s}
        <div class="sideitem" class:on={s.on} class:gearitem={s.top} style="height:{s.h}px">
          {#if s.s}
            {@render ic(s.i, s.s)}
          {:else}
            <svg class="ic" width="29" height="30" viewBox="0 0 27 28">{@html S[s.i]}</svg>
          {/if}
        </div>
      {/each}
    </aside>

    <div class="panel">
      <div class="phead"><span>装配导航器</span><i class="pmax"></i></div>
      <div class="table">
        <div class="trow thead">
          {#each cols as col, n}
            <div class="td h{n}">{col}{#if n === 0}<span class="sortup"></span>{/if}</div>
          {/each}
          <div class="td"></div>
        </div>
        <svg class="connect" width="70" height="120" viewBox="0 0 70 120">
          <path d="M11 4V30M11 10H20M30 30V110M30 50H35M30 70H42M30 90H42M30 110H42" fill="none" stroke="#888" stroke-dasharray="1 2"/>
        </svg>
        {#each rows as row, n}
          <div class="trow" class:alt={n % 2 === 0} class:bold={row.bold}>
            <div class="td name" style="padding-left:{row.pl}px">
              {#if row.box}<span class="pm" class:wide={row.wide}>{row.box}</span>{/if}
              {#if row.chk}<span class="chk"><svg width="12" height="12" viewBox="0 0 12 12"><path d="M2 6l3 4 6-9" fill="none" stroke="#d01c24" stroke-width="2.6"/></svg></span>{/if}
              <span class="tic">{@render ic(row.ic, 18)}</span>
              <span>{row.name}</span>
            </div>
            <div class="td"></div>
            <div class="td mid">
              {#if row.save}{@render ic("save", 16)}{/if}
              {#if row.dash}{@render ic("dash", 16)}{/if}
            </div>
            <div class="td"></div>
            <div class="td pad">{row.qty ?? ""}</div>
            <div class="td ref">{row.ref ?? ""}</div>
            <div class="td pad">{row.w ?? ""}</div>
            <div class="td"></div>
          </div>
        {/each}
        {#each blanks as _, n}
          <div class="trow" class:alt={(n + rows.length) % 2 === 0}>
            <div class="td name"></div><div class="td"></div><div class="td"></div><div class="td"></div><div class="td"></div><div class="td"></div><div class="td"></div><div class="td"></div>
          </div>
        {/each}
      </div>
      <div class="hscroll"></div>
      <div class="section"><span>预览</span><svg width="14" height="10" viewBox="0 0 14 10"><path d="M2 1l5 7 5-7" fill="none" stroke="#13677f" stroke-width="2.2"/></svg></div>
      <div class="section"><span>相关性</span><svg width="14" height="10" viewBox="0 0 14 10"><path d="M2 1l5 7 5-7" fill="none" stroke="#13677f" stroke-width="2.2"/></svg></div>
    </div>

    <div class="work">
      <div class="docbar">
        <div class="doctab">{@render ic("tabIco", 16)}<span>_asm1.prt</span><b>✕</b></div>
      </div>
      <div class="canvas">
        <svg class="drawing" width="1337" height="814" viewBox="583 204 1337 814">
          <defs>
            <pattern id="fw" width="20" height="20" patternUnits="userSpaceOnUse"><path d="M0 20L20 0" stroke="#000" stroke-width="1" /></pattern>
            <pattern id="bk" width="20" height="20" patternUnits="userSpaceOnUse"><path d="M0 0L20 20" stroke="#000" stroke-width="1" /></pattern>
          </defs>
          <path d="M672 204H705V294H711V439H672Z" fill="url(#bk)" />
          <path d="M672 458H711V472H672Z" fill="url(#bk)" />
          <path d="M705 204H898L901 218H705Z" fill="url(#fw)" />
          <path d="M938 204H1655V218H941Z" fill="url(#fw)" />
          <path d="M705 283H867Q865 298 882 315H731L720 295H705Z" fill="url(#fw)" />
          <path d="M906 283H1655V315H922Q904 298 906 283Z" fill="url(#fw)" />
          <path d="M753 282H774V315H753Z" fill="#ccc" />
          <path d="M1127 316Q1131 300 1142 300Q1152 300 1156 316Z" fill="#ccc" />
          {#each thin as d}<path {d} fill="none" stroke="#000" stroke-width="1" />{/each}
          {#each thick as d}<path {d} fill="none" stroke="#000" stroke-width="2" />{/each}
          {#each heavy as d}<path {d} fill="none" stroke="#000" stroke-width="3" />{/each}
          <path d="M712 295L720 295L727 304L734 315L712 323Z" fill="#000" />
          <path d="M659 353H672V367Z" fill="#000" />
          <path d="M712 341L716 351L719 347Z" fill="#000" />
          <rect x="795.5" y="330" width="3" height="4" fill="#000" />
          <path d="M664 500H672M672 500H682M703 500H711M711 500H721" stroke="#000" stroke-width="2" />
          {#each labels as [x, y, txt, size, len]}
            <text class="dtext" {x} {y} font-size={size} textLength={len} lengthAdjust="spacingAndGlyphs" text-anchor="middle">{txt}</text>
          {/each}
          <text class="dtext" transform="translate(791 250) rotate(-90)" font-size="20" textLength="53" lengthAdjust="spacingAndGlyphs" text-anchor="middle">⌀140 ±2</text>
          <text class="dtext" transform="translate(740 420) rotate(90)" font-size="18" textLength="22" lengthAdjust="spacingAndGlyphs" text-anchor="middle">6.3</text>
          <text class="sheet" x="594" y="1010">"Sheet 1"</text>
        </svg>
      </div>
    </div>
  </main>

  <footer class="status">
    <span>拖动网格线以调整行大小</span>
    <div class="stright">{@render ic("flagsq", 17)}{@render ic("fitwin", 17)}</div>
  </footer>

  <footer class="taskbar">
    <span class="task w1"><svg width="18" height="18" viewBox="0 0 18 18"><path d="M1 3.2L7.5 2.2V8.3H1ZM8.5 2L17 .8V8.3H8.5ZM1 9.4H7.5V15.6L1 14.7ZM8.5 9.4H17V17L8.5 15.8Z" fill="#fff"/></svg></span>
    <span class="task w2"><svg width="20" height="20" viewBox="0 0 20 20"><circle cx="12" cy="8" r="5.5" fill="none" stroke="#fff" stroke-width="1.3"/><path d="M8 12L3 18" stroke="#fff" stroke-width="1.5"/></svg></span>
    <span class="task w3 under"><svg width="24" height="24" viewBox="0 0 24 24"><circle cx="12" cy="12" r="11" fill="#f2f5fb"/><circle cx="12" cy="12" r="9.5" fill="#5c9ae8"/><path d="M16 5C9 3 6 8 11 11C15 13 15 17 8 19C14 21 19 16 14 12C10 9 10 6 16 5Z" fill="#fff"/></svg></span>
    <span class="task w4"><svg width="22" height="26" viewBox="0 0 22 26"><ellipse cx="11" cy="13" rx="8" ry="12" fill="#111"/><ellipse cx="11" cy="17" rx="5.5" ry="7" fill="#fff"/><path d="M4 12Q11 16 18 12L17 15Q11 18 5 15Z" fill="#d8232a"/><path d="M8 10L14 10L11 12Z" fill="#f2b418"/><circle cx="8.5" cy="6" r="1.4" fill="#fff"/><circle cx="13.5" cy="6" r="1.4" fill="#fff"/><path d="M3 25h7l-2-3zM12 25h7l-4-3z" fill="#f2b418"/></svg></span>
    <span class="task w5 under"><svg width="24" height="22" viewBox="0 0 24 22"><path d="M1 3H9L11 5H23V21H1Z" fill="#f4d160"/><path d="M1 6H23V21H1Z" fill="#fbdc72"/><path d="M7 13H17V21H14V16H10V21H7Z" fill="#2f86c8"/></svg></span>
    <span class="task w6 active"><svg width="26" height="26" viewBox="0 0 26 26"><circle cx="12" cy="15" r="9" fill="#2a9ad8"/><path d="M3 19C10 22 22 14 24 6L21 5C19 11 12 18 3 19Z" fill="#e6b820"/><path d="M6 1L17 3L12 12Z" fill="#d8232a"/></svg></span>
    <div class="tray">
      <svg width="14" height="10" viewBox="0 0 14 10"><path d="M1 8l6-6 6 6" fill="none" stroke="#fff" stroke-width="1.2"/></svg>
      <svg width="18" height="12" viewBox="0 0 18 12"><path d="M1 2h3M1 4.5h3v3H2.5V10M7 2h10v8H7z" fill="none" stroke="#fff"/><rect x="8" y="3" width="7" height="6" fill="#fff"/></svg>
      <svg width="16" height="14" viewBox="0 0 16 14"><path d="M1 13C2 7 6 3 12 1M4 13C5 9 8 6 12 4.5M7 13C8 11 10 9 12 8" fill="none" stroke="#c8ccd0"/><circle cx="12.5" cy="12" r="1.5" fill="#fff"/></svg>
      <svg width="17" height="14" viewBox="0 0 17 14"><path d="M1 5H4L8 1V13L4 9H1ZM10 4.5Q12 7 10 9.5M12 3Q15 7 12 11" fill="none" stroke="#fff"/></svg>
      <span class="ime">中</span>
      <div class="clock"><span>8:49</span><span>2021/9/22</span></div>
      <svg class="note" width="18" height="18" viewBox="0 0 18 18"><path d="M1.5 2h15v11H11l-2 2.5L7 13H1.5Z" fill="none" stroke="#fff" stroke-width="1.1"/></svg>
    </div>
  </footer>

  <svg class="annot" width="1920" height="1080" viewBox="0 0 1920 1080">
    <path d="M494 200C505 196 530 195 553 193C565 192 574 194 577 200C581 212 584 230 585 247C585 257 582 264 576 268C560 273 530 274 500 270C503 255 504 250 502 235C501 225 497 212 494 200Z" fill="none" stroke="#dc1f2b" stroke-width="3"/>
    <path d="M1704.5 657C1720 654 1735 652 1747 653L1766 654C1768 670 1770 690 1770 700L1768 713C1755 714 1745 713 1738 715C1728 717 1720 722 1714 724C1713 712 1709 685 1704.5 657Z" fill="none" stroke="#dc1f2b" stroke-width="3"/>
  </svg>

  <div class="sogou">
    <svg width="28" height="28" viewBox="0 0 28 28"><path d="M3 4L25 0L28 24L5 28Z" fill="#e8542a"/><path d="M21 8C15 5 8 7 9 11C10 15 20 13 20 18C20 22 12 22 7 20" fill="none" stroke="#fff" stroke-width="4"/></svg>
    <span class="zh">中</span>
    <svg width="16" height="12" viewBox="0 0 16 12"><rect x="0.5" y="0.5" width="15" height="11" rx="2" fill="#2f7fd0"/><path d="M3 4h1M6 4h1M9 4h1M12 4h1M3 6.5h1M6 6.5h1M9 6.5h1M12 6.5h1M5 9h6" stroke="#fff"/></svg>
  </div>
</div>

<style>
  :global(body) {
    margin: 0;
    background: #fff;
  }
  .app {
    position: relative;
    width: 1920px;
    height: 1080px;
    overflow: hidden;
    display: flex;
    flex-direction: column;
    font-family: "Liberation Sans", "Noto Sans CJK SC", sans-serif;
    font-size: 12px;
    color: #222;
  }
  .ic { display: block; flex: none; }
  .caret {
    display: inline-block;
    width: 0;
    height: 0;
    border-left: 3px solid transparent;
    border-right: 3px solid transparent;
    border-top: 4px solid #222;
  }

  .titlebar { height: 26px; display: flex; align-items: center; background: #fff; flex: none; }
  .quick { width: 1073px; display: flex; align-items: center; height: 26px; flex: none; }
  .nx { width: 40px; padding-left: 4px; box-sizing: border-box; font-weight: 700; font-size: 22px; color: #8d9dab; letter-spacing: -0.5px; }
  .vsep { display: block; width: 1px; height: 20px; background: #cfcfcf; flex: none; }
  .m1 { margin: 0 1px; } .m2 { margin: 0 2px; } .m3 { margin: 0 3px; }
  .nxsep { margin-right: 3px; }
  .q { display: flex; justify-content: center; align-items: center; flex: none; }
  .w12 { width: 12px; } .w14 { width: 14px; } .w22 { width: 22px; } .w23 { width: 23px; } .w24 { width: 24px; } .w30 { width: 30px; }
  .lm { margin-left: 3px; }
  .qlabel { font-size: 11px; white-space: nowrap; padding-bottom: 2px; }
  .apptitle { width: 74px; text-align: center; font-size: 12.5px; white-space: nowrap; padding-bottom: 2px; }
  .brand { margin-left: auto; font-weight: 700; font-size: 13.5px; color: #0f9a9c; letter-spacing: 0.3px; }
  .winbtns { width: 92px; display: flex; justify-content: space-between; align-items: center; padding: 0 5px 0 24px; box-sizing: border-box; }

  .tabs { height: 28px; display: flex; background: #dcdcdc; flex: none; align-items: stretch; }
  .filetab { width: 81px; background: #5ba5ba; color: #fff; font-size: 13px; display: flex; align-items: center; justify-content: center; padding-bottom: 2px; box-sizing: border-box; }
  .tab { display: flex; align-items: center; justify-content: center; font-size: 13px; white-space: nowrap; padding-bottom: 2px; box-sizing: border-box; }
  .tab.current { width: 53px; margin-left: 1px; background: #fff; color: #0f7d9d; border-top: 1px solid #bbb; }
  .tabright { margin-left: auto; display: flex; align-items: center; padding-bottom: 2px; }
  .searchbox { width: 124px; height: 20px; box-sizing: border-box; border: 1px solid #aaa; background: #fff; color: #aaa; font-size: 11px; display: flex; align-items: center; justify-content: space-between; padding: 0 2px; }
  .tr1 { margin-left: 12px; } .tr2 { margin-left: 8px; } .tr3 { margin-left: 8px; }
  .tr4 { margin: 0 9px 0 7px; display: flex; align-items: center; font-size: 11px; gap: 3px; }

  .ribbon { height: 94px; display: flex; background: #fff; border-bottom: 2px solid #e2e2e2; box-sizing: border-box; flex: none; }
  .group { display: flex; flex-direction: column; box-sizing: border-box; border-right: 1px solid #dedede; margin-top: 5px; height: 86px; flex: none; position: relative; }
  .gbody { height: 72px; display: flex; margin-top: -1px; flex: none; }
  .glabel { height: 15px; line-height: 15px; text-align: center; color: #0d6d8a; font-size: 11px; white-space: nowrap; position: relative; }
  .launched { padding-right: 18px; }
  .launch { position: absolute; right: 9px; top: 1px; }
  .bigbtn { display: flex; flex-direction: column; align-items: center; box-sizing: border-box; flex: none; }
  .bigic { height: 34px; display: flex; align-items: flex-end; }
  .biglabel { font-size: 11px; line-height: 16px; white-space: nowrap; margin-top: 2px; }
  .bigbtn .caret { margin-top: 7px; }
  .boxed .bigic { box-sizing: border-box; width: 38px; border: 1px solid #d8d8d8; border-radius: 3px; background: #fff; align-items: center; justify-content: center; }
  .igrid { display: grid; grid-auto-rows: 22px; flex: none; margin-top: -3px; align-content: start; }
  .cell { display: flex; align-items: center; justify-content: center; position: relative; }
  .cellcaret { position: absolute; right: -9px; top: 6px; }
  .layers { display: flex; flex-direction: column; gap: 4px; margin-top: -1px; padding-left: 8px; }
  .layer { display: flex; align-items: center; gap: 3px; height: 18px; font-size: 11px; white-space: nowrap; }

  .gc { width: 473px; }
  .rows2 { flex-direction: column; padding: 8px 0 0 3px; box-sizing: border-box; gap: 11px; }
  .grow { display: flex; align-items: center; height: 19px; }
  .gcell { width: 23.2px; display: flex; justify-content: center; flex: none; }
  .msep { display: block; width: 1px; height: 20px; margin: 0 3px; background: #d5d5d5; flex: none; }
  .sk { width: 120px; }
  .skbody { padding: 0 0 0 7px; }
  .gallery { width: 92px; height: 66px; box-sizing: border-box; border: 1px solid #dedede; display: grid; grid-template-columns: repeat(4, 1fr); grid-auto-rows: 21.5px; }
  .skcell { display: flex; align-items: center; justify-content: center; }
  .scroller { width: 20px; display: flex; flex-direction: column; align-items: center; justify-content: space-around; height: 66px; }
  .up { width: 0; height: 0; border-left: 3px solid transparent; border-right: 3px solid transparent; border-bottom: 4px solid #bbb; }
  .lined { border-top: 1px solid #222; padding-top: 1px; line-height: 0; }
  .std { width: 104px; }
  .stdrows { padding-left: 4px; }
  .stdlabel { text-align: left; padding-left: 2px; }
  .ribbonend { flex: 1; display: flex; justify-content: flex-end; align-items: flex-end; padding: 0 5px 7px 0; }

  .toolbar { height: 32px; display: flex; align-items: center; background: #fff; border-bottom: 1px solid #999; box-sizing: border-box; flex: none; }
  .menubtn { width: 85px; padding-left: 9px; box-sizing: border-box; display: flex; align-items: center; gap: 2px; font-size: 11px; white-space: nowrap; }
  .tsep { display: block; width: 1px; height: 26px; background: #ddd; margin: 0 7px; flex: none; }
  .tsep.first { margin: 0 13px 0 1px; }
  .sel { height: 20px; box-sizing: border-box; border: 1px solid #aaa; background: #fff; display: flex; align-items: center; justify-content: flex-end; padding: 0 5px; flex: none; font-size: 11.5px; }
  .sel.one { width: 132px; margin-right: 9px; }
  .sel.two { width: 137px; margin-right: 8px; justify-content: space-between; padding-left: 2px; }
  .tcell { height: 24px; display: flex; align-items: center; justify-content: center; flex: none; box-sizing: border-box; }
  .tcell.on { background: #c3e0e8; border: 1px solid #b3d5de; }
  .tbend { margin-left: auto; padding-right: 5px; line-height: 0; }

  .main { flex: 1; display: flex; min-height: 0; }
  .side { width: 33px; flex: none; background: #dcdcdc; border-right: 1px solid #9e9e9e; box-sizing: border-box; display: flex; flex-direction: column; }
  .sideitem { display: flex; align-items: center; justify-content: center; flex: none; padding-left: 2px; box-sizing: border-box; }
  .gearitem { align-items: flex-start; padding-top: 3px; padding-left: 0; justify-content: flex-start; padding-inline-start: 5px; }
  .sideitem.on { background: #fff; margin-left: 2px; margin-right: -1px; border: 1px solid #cfcfcf; border-right: 0; }

  .panel { width: 550px; flex: none; background: #fff; border-right: 1px solid #999; box-sizing: border-box; padding: 0 9px 0 5px; display: flex; flex-direction: column; position: relative; }
  .phead { height: 29px; flex: none; display: flex; align-items: center; justify-content: space-between; font-size: 11.5px; padding: 0 7px 3px 4px; box-sizing: border-box; }
  .pmax { display: block; width: 10px; height: 8px; border: 1px solid #333; border-top-width: 2px; }
  .table { height: 750px; flex: none; overflow: hidden; border: 1px solid #d4d4d4; border-bottom: 0; box-sizing: border-box; position: relative; }
  .trow { display: grid; grid-template-columns: 231px 36px 24px 24px 50px 100px 64px 1fr; height: 20px; background: #fff; }
  .trow.alt { background: #f7f7f7; }
  .thead { height: 21px; background: #f0f0f0; border-bottom: 1px solid #d8d8d8; font-size: 12px; }
  .td { border-right: 1px solid #e6e6e6; line-height: 20px; box-sizing: border-box; white-space: nowrap; overflow: hidden; display: flex; align-items: center; padding-bottom: 1px; }
  .thead .td { padding-left: 7px; border-right-color: #d2d2d2; padding-bottom: 0; }
  .thead .h2, .thead .h3 { padding-left: 6px; }
  .sortup { width: 0; height: 0; border-left: 5px solid transparent; border-right: 5px solid transparent; border-bottom: 6px solid #222; margin-left: 18px; }
  .name { border-right: 1px solid #000; }
  .connect { position: absolute; left: 10px; top: 20px; pointer-events: none; }
  .pm { width: 9px; height: 9px; box-sizing: border-box; border: 1px solid #bbb; font-size: 9px; line-height: 7px; text-align: center; background: #fff; margin-right: 7px; flex: none; }
  .pm.wide { margin-right: 5px; }
  .chk { width: 12px; height: 12px; border: 1px solid #333; box-sizing: border-box; background: #fff; flex: none; display: flex; align-items: center; justify-content: center; }
  .chk svg { flex: none; margin: -1px; }
  .tic { width: 17px; display: flex; justify-content: center; flex: none; margin: 0 2px 0 1px; }
  .bold { font-weight: 700; }
  .mid { justify-content: center; }
  .pad { padding-left: 5px; }
  .ref { padding-left: 3px; }
  .hscroll { height: 4px; flex: none; background: #d4d4d4; border: 1px solid #a8a8a8; box-sizing: border-box; }
  .section { height: 24px; flex: none; box-sizing: border-box; border-bottom: 2px solid #d4d4d4; color: #13708c; font-size: 12.5px; display: flex; align-items: center; justify-content: space-between; padding: 2px 6px 0 7px; }

  .work { flex: 1; display: flex; flex-direction: column; min-width: 0; }
  .docbar { height: 24px; flex: none; background: #fff; box-sizing: border-box; border-bottom: 2px solid #5f9fb2; }
  .doctab { width: 105px; height: 22px; background: #5ba5ba; color: #fff; display: flex; align-items: center; gap: 4px; padding-left: 5px; box-sizing: border-box; font-size: 12.5px; }
  .doctab b { font-size: 11px; margin-left: 5px; }
  .canvas { flex: 1; background: #ccc; min-height: 0; }
  .drawing { display: block; }
  .dtext { font-family: "Liberation Sans", "Noto Sans CJK SC", sans-serif; font-weight: 300; fill: #000; }
  .sheet { font-family: "Liberation Sans", sans-serif; font-size: 13px; letter-spacing: 0.4px; fill: #111; }

  .status { height: 21px; flex: none; background: #fff; border-top: 1px solid #aaa; box-sizing: border-box; display: flex; align-items: center; justify-content: space-between; padding: 0 55px 0 3px; font-size: 11px; }
  .status > span { margin-bottom: 3px; }
  .stright { display: flex; gap: 4px; }

  .taskbar { height: 40px; flex: none; display: flex; align-items: center; background: linear-gradient(90deg, #1f313a, #20272f 50%, #1b2530); color: #fff; }
  .task { height: 40px; display: flex; align-items: center; justify-content: center; flex: none; box-sizing: border-box; }
  .w1 { width: 46px; } .w2 { width: 49px; } .w3 { width: 48px; } .w4 { width: 51px; } .w5 { width: 50px; } .w6 { width: 48px; }
  .w3 { margin-left: 2px; }
  .under { border-bottom: 2px solid #6aa5dc; }
  .active { background: #474f57; border-bottom: 2px solid #6aa5dc; }
  .tray { margin-left: auto; display: flex; align-items: center; color: #fff; }
  .tray > svg { margin-right: 8px; flex: none; }
  .ime { font-size: 13px; margin-right: 2px; }
  .clock { width: 74px; display: flex; flex-direction: column; align-items: center; font-size: 13.5px; line-height: 20px; color: #e8e8e8; }
  .tray .note { margin: 0 24px 0 10px; }

  .annot { position: absolute; left: 0; top: 0; pointer-events: none; }
  .sogou { position: absolute; left: 1847px; top: 849px; width: 73px; height: 28px; display: flex; align-items: center; background: linear-gradient(90deg, transparent 20px, #fff 20px); }
  .sogou .zh { color: #1f75c8; font-weight: 700; font-size: 15px; margin: 0 5px 0 6px; }
</style>
